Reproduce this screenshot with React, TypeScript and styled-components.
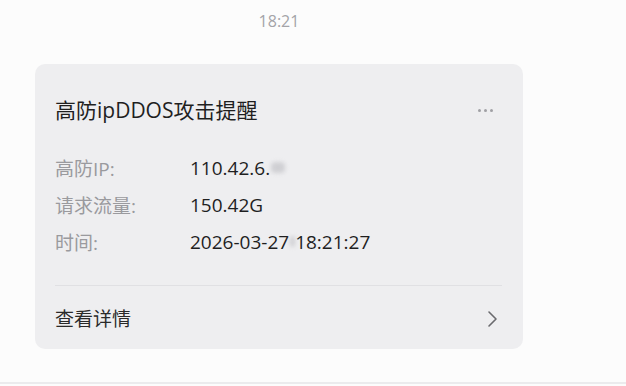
import React from "react";
import styled, { createGlobalStyle } from "styled-components";

const GlobalStyle = createGlobalStyle`
  html, body {
    margin: 0;
    padding: 0;
    background: #fcfcfc;
    font-family: "Open Sans", "Noto Sans CJK SC", sans-serif;
  }
  #root { height: 100vh; }
`;

const Page = styled.div`
  height: 100vh;
  display: flex;
  flex-direction: column;
  background: #fcfcfc;
`;

const Feed = styled.main`
  flex: 1;
  padding: 11px 0 0 35px;
`;

const Column = styled.div`
  width: 488px;
  display: flex;
  flex-direction: column;
  align-items: stretch;
`;

const TimeStamp = styled.div`
  text-align: center;
  font-size: 16px;
  line-height: 20px;
  color: #a4a4a8;
  margin-bottom: 33px;
`;

const Card = styled.section`
  background: #eeeef0;
  border-radius: 10px;
  padding: 32px 21px 0 20px;
  display: flex;
  flex-direction: column;
`;

const TitleRow = styled.div`
  display: flex;
  align-items: center;
  justify-content: space-between;
  height: 28px;
`;

const Title = styled.h2`
  margin: 0;
  font-size: 21px;
  font-weight: 400;
  line-height: 28px;
  color: #1f1f1f;
`;

const MoreDots = styled.div`
  display: flex;
  gap: 3px;
  margin-right: 9px;
  span {
    width: 3px;
    height: 3px;
    border-radius: 50%;
    background: #a0a0a4;
  }
`;

const Fields = styled.dl`
  margin: 25px 0 25px;
  display: grid;
  grid-template-columns: 135px 1fr;
  grid-auto-rows: 37px;
  align-items: center;
`;

const Label = styled.dt`
  font-size: 19px;
  color: #9a9a9e;
  margin: 0;
`;

const Value = styled.dd`
  font-size: 19px;
  color: #1f1f1f;
  margin: 0;
  display: flex;
  align-items: center;
`;

const Blur = styled.span<{ $w: number }>`
  display: inline-block;
  width: ${(p) => p.$w}px;
  height: 11px;
  margin-left: 1px;
  border-radius: 4px;
  background: #c8c8cc;
  filter: blur(2px);
  opacity: 0.8;
`;

const Divider = styled.hr`
  margin: 0;
  border: none;
  border-top: 1px solid #e0e0e3;
`;

const Footer = styled.div`
  display: flex;
  align-items: center;
  justify-content: space-between;
  padding: 22px 0 19px;
`;

const FooterText = styled.span`
  font-size: 19px;
  line-height: 22px;
  color: #2a2a2a;
`;

const Chevron = styled.svg`
  width: 11px;
  height: 18px;
  margin-right: 4px;
`;

const BottomBar = styled.div`
  height: 2px;
  border-top: 2px solid #ebebed;
  background: #fcfcfc;
`;

export default function App() {
  return (
    <Page>
      <GlobalStyle />
      <Feed>
        <Column>
          <TimeStamp>18:21</TimeStamp>
          <Card>
            <TitleRow>
              <Title>高防ipDDOS攻击提醒</Title>
              <MoreDots>
                <span />
                <span />
                <span />
              </MoreDots>
            </TitleRow>
            <Fields>
              <Label>高防IP:</Label>
              <Value>
                110.42.6.<Blur $w={14} />
              </Value>
              <Label>请求流量:</Label>
              <Value>150.42G</Value>
              <Label>时间:</Label>
              <Value>
                2026-03-27<Blur $w={5} />18:21:27
              </Value>
            </Fields>
            <Divider />
            <Footer>
              <FooterText>查看详情</FooterText>
              <Chevron viewBox="0 0 11 18">
                <path d="M2 2 L9 9 L2 16" fill="none" stroke="#6a6a6e" strokeWidth="1.6" strokeLinecap="round" strokeLinejoin="round" />
              </Chevron>
            </Footer>
          </Card>
        </Column>
      </Feed>
      <BottomBar />
    </Page>
  );
}
